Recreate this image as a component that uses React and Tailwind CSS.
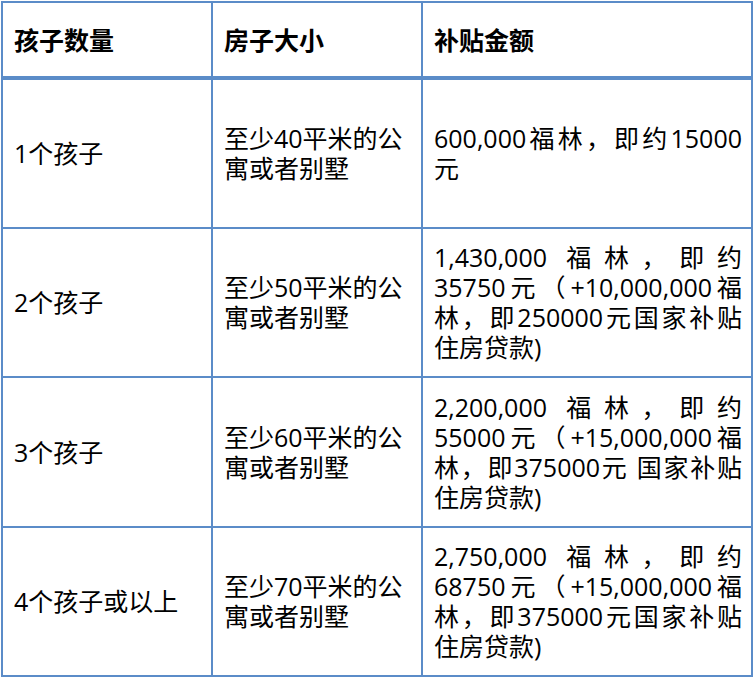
export default function App() {
  const rows = [
    {
      a: "1个孩子",
      b: "至少40平米的公寓或者别墅",
      c: "600,000福林，即约15000元",
    },
    {
      a: "2个孩子",
      b: "至少50平米的公寓或者别墅",
      c: "1,430,000 福林，即约35750元（+10,000,000福林，即250000元国家补贴住房贷款)",
    },
    {
      a: "3个孩子",
      b: "至少60平米的公寓或者别墅",
      c: "2,200,000 福林，即约55000元（+15,000,000福林，即375000元 国家补贴住房贷款)",
    },
    {
      a: "4个孩子或以上",
      b: "至少70平米的公寓或者别墅",
      c: "2,750,000 福林，即约68750元（+15,000,000福林，即375000元国家补贴住房贷款)",
    },
  ];
  return (
    <div className="bg-white w-[755px] h-[679px] p-px">
      <table className="w-[752px] table-fixed border-collapse text-[25px] leading-[30px] text-black font-['Open_Sans','Noto_Sans_CJK_SC',sans-serif]">
        <colgroup>
          <col className="w-[210px]" />
          <col className="w-[210px]" />
          <col />
        </colgroup>
        <thead>
          <tr className="h-[76px]">
            <th className="border-2 border-b-4 border-[#5b8cc8] px-[11px] text-left align-middle font-bold">
              孩子数量
            </th>
            <th className="border-2 border-b-4 border-[#5b8cc8] px-[11px] text-left align-middle font-bold">
              房子大小
            </th>
            <th className="border-2 border-b-4 border-[#5b8cc8] px-[11px] text-left align-middle font-bold">
              补贴金额
            </th>
          </tr>
        </thead>
        <tbody>
          {rows.map((r, i) => (
            <tr key={i} className="h-[149.5px]">
              <td className="border-2 border-[#5b8cc8] px-[11px] align-middle">
                {r.a}
              </td>
              <td className="border-2 border-[#5b8cc8] px-[11px] align-middle">
                {r.b}
              </td>
              <td className="border-2 border-[#5b8cc8] pl-[11px] pr-[9px] align-middle text-justify">
                {r.c}
              </td>
            </tr>
          ))}
        </tbody>
      </table>
    </div>
  );
}
